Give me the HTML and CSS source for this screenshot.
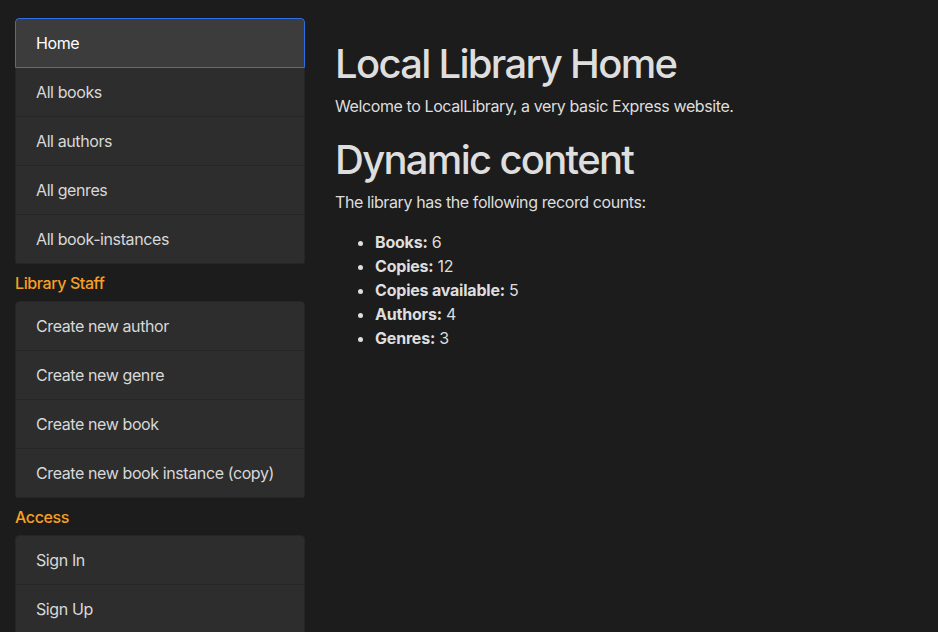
FILE: index.html
```html
<!DOCTYPE html>
<html lang="en">
<head>
<meta charset="utf-8">
<title>Local Library</title>
<link rel="stylesheet" href="styles.css">
</head>
<body>
<div class="page">
  <nav class="sidebar">
    <ul class="list-group">
      <li class="item active">Home</li>
      <li class="item">All books</li>
      <li class="item">All authors</li>
      <li class="item">All genres</li>
      <li class="item">All book-instances</li>
    </ul>
    <div class="group-title">Library Staff</div>
    <ul class="list-group">
      <li class="item">Create new author</li>
      <li class="item">Create new genre</li>
      <li class="item">Create new book</li>
      <li class="item">Create new book instance (copy)</li>
    </ul>
    <div class="group-title">Access</div>
    <ul class="list-group">
      <li class="item">Sign In</li>
      <li class="item">Sign Up</li>
    </ul>
  </nav>
  <main class="content">
    <h1 class="title">Local Library Home</h1>
    <p class="text">Welcome to LocalLibrary, a very basic Express website.</p>
    <h1 class="title">Dynamic content</h1>
    <p class="text">The library has the following record counts:</p>
    <ul class="counts">
      <li><strong>Books:</strong> 6</li>
      <li><strong>Copies:</strong> 12</li>
      <li><strong>Copies available:</strong> 5</li>
      <li><strong>Authors:</strong> 4</li>
      <li><strong>Genres:</strong> 3</li>
    </ul>
  </main>
</div>
</body>
</html>
```
FILE: styles.css
```css
html, body {
  margin: 0;
  padding: 0;
  background: #1c1c1c;
  color: #dedede;
  font-family: Inter, "Noto Sans", sans-serif;
  font-size: 16px;
  line-height: 1.5;
  letter-spacing: -0.4px;
}
.page {
  display: flex;
  gap: 30px;
  padding: 18px 15px 0 15px;
}
.sidebar {
  width: 290px;
  flex: none;
}
.list-group {
  list-style: none;
  margin: 0;
  padding: 0;
  border-radius: 4px;
  overflow: hidden;
}
.item {
  background: #2d2d2d;
  color: #d8d8d8;
  padding: 12px 16px 12px 20px;
  height: 24px;
  white-space: nowrap;
  border: 1px solid #262626;
  border-top-width: 0;
}
.item:first-child {
  border-top-width: 1px;
  border-radius: 4px 4px 0 0;
}
.item.active {
  background: #3c3c3c;
  color: #fff;
  border-color: #2f6fe6;
}
.group-title {
  color: #f7a024;
  font-weight: 500;
  height: 37px;
  line-height: 38px;
  font-size: 16px;
}
.content {
  flex: 1;
  padding-top: 20px;
}
.title {
  font-size: 40px;
  font-weight: 500;
  line-height: 1.2;
  letter-spacing: -1.7px;
  padding-top: 2px;
  margin: 0 0 6px 0;
  color: #dedede;
}
.text {
  margin: 0 0 16px 0;
}
.counts {
  margin: 0;
  padding-left: 40px;
  line-height: 24px;
}
.counts strong {
  font-weight: 700;
  letter-spacing: -0.2px;
}
```
